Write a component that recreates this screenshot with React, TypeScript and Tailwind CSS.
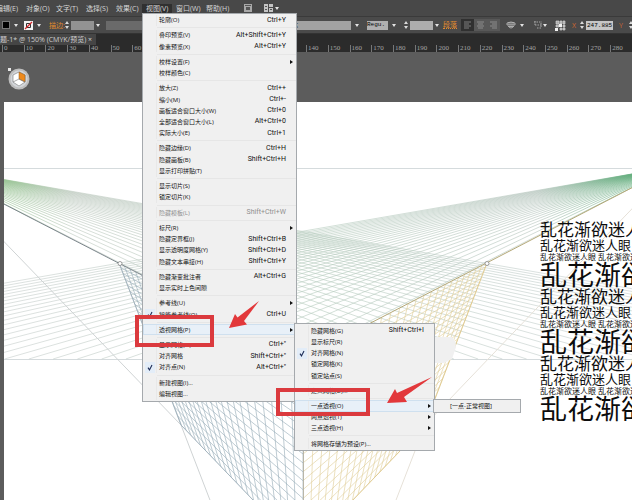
import { Fragment } from "react";
import type { ReactNode } from "react";
import { clsx } from "clsx";

type Item = {
  label: string;
  keys?: string;
  checked?: boolean;
  disabled?: boolean;
  active?: boolean;
  sub?: boolean;
  menu?: ReactNode;
};

const viewMenu: Item[][] = [
  [{ label: "轮廓(O)", keys: "Ctrl+Y" }],
  [
    { label: "叠印预览(V)", keys: "Alt+Shift+Ctrl+Y" },
    { label: "像素预览(X)", keys: "Alt+Ctrl+Y" },
  ],
  [{ label: "校样设置(F)", sub: true }, { label: "校样颜色(C)" }],
  [
    { label: "放大(Z)", keys: "Ctrl++" },
    { label: "缩小(M)", keys: "Ctrl+-" },
    { label: "画板适合窗口大小(W)", keys: "Ctrl+0" },
    { label: "全部适合窗口大小(L)", keys: "Alt+Ctrl+0" },
    { label: "实际大小(E)", keys: "Ctrl+1" },
  ],
  [
    { label: "隐藏边缘(D)", keys: "Ctrl+H" },
    { label: "隐藏画板(B)", keys: "Shift+Ctrl+H" },
    { label: "显示打印拼贴(T)" },
  ],
  [{ label: "显示切片(S)" }, { label: "锁定切片(K)" }],
  [{ label: "隐藏模板(L)", keys: "Shift+Ctrl+W", disabled: true }],
  [
    { label: "标尺(R)", sub: true },
    { label: "隐藏定界框(J)", keys: "Shift+Ctrl+B" },
    { label: "显示透明度网格(Y)", keys: "Shift+Ctrl+D" },
    { label: "隐藏文本串接(H)", keys: "Shift+Ctrl+Y" },
  ],
  [
    { label: "隐藏渐变批注者", keys: "Alt+Ctrl+G" },
    { label: "显示实时上色间隙" },
  ],
  [
    { label: "参考线(U)", sub: true },
    { label: "智能参考线(Q)", keys: "Ctrl+U", checked: true },
  ],
  [{ label: "透视网格(P)", sub: true, active: true, menu: <GridMenu /> }],
  [
    { label: "显示网格(G)", keys: 'Ctrl+"' },
    { label: "对齐网格", keys: 'Shift+Ctrl+"' },
    { label: "对齐点(N)", keys: 'Alt+Ctrl+"', checked: true },
  ],
  [{ label: "新建视图(I)..." }, { label: "编辑视图..." }],
];

const gridMenu: Item[][] = [
  [
    { label: "隐藏网格(G)", keys: "Shift+Ctrl+I" },
    { label: "显示标尺(R)" },
    { label: "对齐网格(N)", checked: true },
    { label: "锁定网格(K)" },
    { label: "锁定站点(S)" },
  ],
  [{ label: "定义网格(D)..." }],
  [
    { label: "一点透视(O)", sub: true, active: true, menu: <PresetMenu /> },
    { label: "两点透视(T)", sub: true },
    { label: "三点透视(H)", sub: true },
  ],
  [{ label: "将网格存储为预设(P)..." }],
];

function MenuRows({ groups }: { groups: Item[][] }) {
  return groups.map((group, i) => (
    <Fragment key={i}>
      {i > 0 && (
        <li role="separator" className="flex h-1 shrink-0 items-center pl-3.5">
          <div className="h-px w-full bg-[#e6e6e6]" />
        </li>
      )}
      {group.map((item) => (
        <li key={item.label} className="relative flex min-h-0 flex-1">
          <button
            disabled={item.disabled}
            className={clsx(
              "flex w-full items-center text-left leading-none",
              item.disabled ? "text-[#8f8f8f]" : "text-[#111]",
              item.active && "bg-[#e8f0f8] outline outline-[#cfe0ef] -outline-offset-1",
            )}
          >
            <span className="flex w-3.5 shrink-0 justify-center self-stretch border-r border-[#e8e8e8]">
              {item.checked && (
                <svg viewBox="0 0 10 10" className="h-full w-2.5 bg-[#e3edf8]">
                  <path d="M3 5l1.5 2.3L7 2.5" fill="none" stroke="#1b2a55" strokeWidth="1.1" />
                </svg>
              )}
            </span>
            <span className="pl-0.5 whitespace-nowrap">{item.label}</span>
            <span className="ml-auto font-[Roboto] text-[7px] whitespace-nowrap">{item.keys}</span>
            <span className="flex w-2.5 shrink-0 justify-center">
              {item.sub && (
                <svg viewBox="0 0 3 4" className="h-1 w-[3px]">
                  <path d="M0 0l3 2-3 2z" fill="#111" />
                </svg>
              )}
            </span>
          </button>
          {item.menu}
        </li>
      ))}
    </Fragment>
  ));
}

function PresetMenu() {
  return (
    <ul className="absolute -top-px left-full -ml-px flex h-3.5 w-[88px] border border-[#a5a9ad] bg-[#f0f0f0]">
      <li className="flex w-full">
        <button className="w-full pl-4 text-left leading-none whitespace-nowrap text-[#111]">
          [一点-正常视图]
        </button>
      </li>
    </ul>
  );
}

function GridMenu() {
  return (
    <ul className="absolute -top-px left-full -ml-0.5 flex h-32 w-[141px] flex-col border border-[#a5a9ad] bg-[#f0f0f0] py-px">
      <MenuRows groups={gridMenu} />
    </ul>
  );
}

function ViewMenu() {
  return (
    <ul className="absolute top-full left-0 z-10 flex h-[389px] w-[155px] flex-col border border-[#a5a9ad] bg-[#f0f0f0] py-px text-[6px]">
      <MenuRows groups={viewMenu} />
    </ul>
  );
}

const menus = ["编辑(E)", "对象(O)", "文字(T)", "选择(S)", "效果(C)", "视图(V)", "窗口(W)", "帮助(H)"];

function MenuBar() {
  return (
    <nav className="flex h-[17px] items-center border-b border-[#3a3a3a] bg-[#484848] text-[7px] text-[#d6d6d6]">
      <ul className="-ml-2 flex">
        {menus.map((name) => (
          <li key={name} className="relative h-[9px] w-[30px]">
            <button
              className={clsx(
                "flex h-full w-full items-center pl-1 leading-none whitespace-nowrap",
                name === "视图(V)" && "bg-[#303030]",
              )}
            >
              {name}
            </button>
            {name === "视图(V)" && <ViewMenu />}
          </li>
        ))}
      </ul>
      <button aria-label="Bridge" className="ml-3">
        <svg viewBox="0 0 8 8" className="size-2">
          <path d="M0 0h8v8H0z" fill="#a8a8a8" />
          <path d="M1 1h6v1H1zM2 3h4v3H2z" fill="#555" />
        </svg>
      </button>
      <button aria-label="排列文档" className="ml-3 flex items-center gap-0.5">
        <svg viewBox="0 0 9 8" className="h-2 w-[9px]">
          <path d="M0 0h4v8H0zM5 0h4v3H5zM5 4h4v4H5z" fill="#c4c4c4" />
          <path d="M1 2h2v1H1zM1 5h2v1H1zM6 5h2v1H6z" fill="#555" />
        </svg>
        <Caret />
      </button>
    </nav>
  );
}

function Caret() {
  return (
    <svg viewBox="0 0 4 3" className="h-[3px] w-1 shrink-0">
      <path d="M0 0h4L2 3z" fill="#e4e4e4" />
    </svg>
  );
}

function Spinner() {
  return (
    <svg viewBox="0 0 4 8" className="h-2 w-1 shrink-0">
      <path d="M0 3l2-3 2 3zM0 5h4L2 8z" fill="#dadada" />
    </svg>
  );
}

function OptionsBar() {
  return (
    <div className="flex h-[17px] items-center border-b border-[#333] bg-[#4a4a4a] text-[7px] leading-none whitespace-nowrap">
      <div className="flex w-[142px] shrink-0 items-center pl-0.5">
        <button aria-label="填色" className="size-2 border border-[#777] bg-black" />
        <span className="ml-1"><Caret /></span>
        <button aria-label="描边颜色" className="ml-1.5">
          <svg viewBox="0 0 9 9" className="size-[9px]">
            <path d="M0 0h9v9H0z" fill="#f3f3f3" />
            <path d="M2.5 2.5h4v4h-4z" fill="none" stroke="#333" />
            <path d="M1 8L8 1" stroke="#d5282c" strokeWidth="1.3" />
          </svg>
        </button>
        <span className="ml-1"><Caret /></span>
        <label htmlFor="stroke" className="ml-2 text-[#e08a2e]">描边:</label>
        <span className="ml-auto"><Spinner /></span>
        <input id="stroke" className="ml-0.5 h-[9px] w-[23px] bg-[#929292]" />
        <span className="ml-0.5"><Caret /></span>
        <input aria-label="画笔" className="ml-1.5 h-[9px] w-9 bg-[#6a6a6a]" />
      </div>
      <div className="ml-[142px] flex flex-1 items-center">
        <select aria-label="字体" className="h-[9px] w-[67px] shrink-0 appearance-none bg-[#a2a2a2] text-black">
          <option>黑体</option>
        </select>
        <span className="ml-1"><Caret /></span>
        <select
          aria-label="字体样式"
          className="ml-2 h-[9px] w-[21px] shrink-0 appearance-none bg-[#b0b0b0] font-['Liberation_Mono'] text-[6px] text-black"
        >
          <option>Regu.</option>
        </select>
        <span className="ml-1"><Caret /></span>
        <span className="ml-2"><Spinner /></span>
        <input aria-label="字号" className="ml-0.5 h-[9px] w-[23px] shrink-0 bg-[#adadad]" />
        <span className="ml-0.5"><Caret /></span>
        <button className="ml-1 border-b border-dotted border-[#e08a2e] text-[#e08a2e]">段落</button>
        <div className="ml-1 flex">
          <AlignButton label="左对齐" d="M1 1h7M1 3h5M1 5h7M1 7h5" on />
          <AlignButton label="居中对齐" d="M1 1h7M2 3h5M1 5h7M2 7h5" />
          <AlignButton label="右对齐" d="M1 1h7M3 3h5M1 5h7M3 7h5" />
        </div>
        <button aria-label="封套" className="ml-1.5 flex items-center gap-1">
          <svg viewBox="0 0 10 8" className="h-2 w-2.5" fill="none" stroke="#c4c4c4" strokeWidth="0.8">
            <path d="M1 4V2q4-2 8 0v2zM3 1v3M5 1v3M7 1v3M2 5q3 4 6 0M3 5.5h4" />
          </svg>
          <Caret />
        </button>
        <button aria-label="对齐" className="ml-2.5 flex items-center">
          <svg viewBox="0 0 9 8" className="h-2 w-[9px]" fill="none" stroke="#a5a5a5" strokeDasharray="1.5 1">
            <path d="M0 1h8M1 4h7M3 7h4M1 0v5M7 2v5" />
          </svg>
          <Caret />
        </button>
        <svg viewBox="0 0 11 11" className="ml-2 size-[11px]">
          <path d="M1 1h3v3H1zM5 1h2v3H5zM8 1h2v3H8zM1 5h3v2H1zM8 5h2v2H8zM5 8h2v2H5zM8 8h2v2H8z" fill="#a9a9a9" stroke="#dedede" strokeWidth="0.6" />
          <path d="M4 4h3v3H4zM0 8h3v3H0z" fill="#f2f2f2" />
        </svg>
        <label htmlFor="posx" className="ml-1.5 w-2 text-[#d0672f]">X</label>
        <Spinner />
        <input
          id="posx"
          defaultValue="247.885"
          className="ml-0.5 h-[9px] w-[27px] shrink-0 bg-[#c6c6c6] pl-px font-['Liberation_Mono'] text-[6px] text-black"
        />
        <label htmlFor="posy" className="ml-1.5 w-2.5 text-[#d0672f]">Y</label>
        <Spinner />
      </div>
      <input id="posy" className="w-0" />
    </div>
  );
}

function AlignButton({ label, d, on }: { label: string; d: string; on?: boolean }) {
  return (
    <button
      aria-label={label}
      className={clsx("flex h-3 w-[13px] items-center justify-center", on ? "bg-[#303030]" : "bg-[#585858]")}
    >
      <svg viewBox="0 0 9 8" className="h-2 w-[9px]" stroke={on ? "#7c7c7c" : "#8c8c8c"}>
        <path d={d} />
      </svg>
    </button>
  );
}

function DocumentHead() {
  return (
    <>
      <div className="flex h-[11px] bg-[#2b2b2b]">
        <div className="flex w-24 items-center justify-between bg-[#454545] pr-1 text-[7px] leading-none whitespace-nowrap text-[#cfcfcf]">
          <span>题-1* @ 150% (CMYK/预览)</span>
          <button aria-label="关闭">×</button>
        </div>
      </div>
      <div className="flex h-[7px] bg-[#2b2b2b] pl-0.5">
        {Array.from({ length: 29 }, (_, i) => (
          <div
            key={i}
            className="min-w-0 flex-1 border-l border-[#777] pl-px font-['Liberation_Serif'] text-[7px] leading-[6px] text-[#a5a5a5]"
          >
            {i * 10}
          </div>
        ))}
      </div>
    </>
  );
}

// Vanishing points: two on the horizon, one far below the page.
const HORIZON = 166;
const LEFT = -68;
const RIGHT = 672;
const CENTER = 303;
const NADIR = 740;

const fan = Array.from({ length: 31 }, (_, i) => 1 / (5.75 - (i * 3.79) / 30));
const wallRows = Array.from({ length: 23 }, (_, i) => 355 + (i * 196) / 22);
const wallCols = Array.from({ length: 23 }, (_, i) => {
  const t = i / 22;
  return (184 * t * 1.6) / (1 + 0.6 * t);
});

function floorPath(dir: 1 | -1) {
  const x = dir === 1 ? LEFT : RIGHT;
  return fan.map((s) => `M${x} ${HORIZON}L${x + (dir * 192) / s} 358`).join("");
}

function wallPath(dir: 1 | -1) {
  const vp = dir === 1 ? RIGHT : LEFT;
  const rows = wallRows.map((y) => `M${CENTER} ${y}L${vp} ${HORIZON}`);
  const cols = wallCols.map((dx) => `M${CENTER + dir * dx} ${357 - dx * 0.516}L${CENTER} ${NADIR}`);
  return rows.join("") + cols.join("");
}

function PerspectiveGrid() {
  return (
    <svg
      viewBox="0 51 632 449"
      preserveAspectRatio="xMinYMin slice"
      className="absolute inset-0 h-full w-full"
      fill="none"
    >
      <defs>
        <linearGradient id="fadeLeft" gradientUnits="userSpaceOnUse" x1="0" y1="0" x2="632" y2="0">
          <stop offset="0" stopColor="#8fc08a" />
          <stop offset="0.12" stopColor="#bcc8be" />
          <stop offset="0.5" stopColor="#b5cbbd" />
          <stop offset="1" stopColor="#c6cdcf" />
        </linearGradient>
        <linearGradient id="fadeRight" gradientUnits="userSpaceOnUse" x1="0" y1="0" x2="632" y2="0">
          <stop offset="0" stopColor="#c6cdcb" />
          <stop offset="0.5" stopColor="#b5cbbd" />
          <stop offset="0.85" stopColor="#b4c4bc" />
          <stop offset="1" stopColor="#62ad7c" />
        </linearGradient>
        <clipPath id="page"><path d="M4 101h628v399H4z" /></clipPath>
        <clipPath id="wallR"><path d="M303 357L487 262L425 424L303 551z" /></clipPath>
        <clipPath id="wallL"><path d="M303 357L119 262L181 424L303 551z" /></clipPath>
      </defs>
      <path d="M4 101h628v1000H4z" fill="#fff" />
      <g clipPath="url(#page)">
        <path d="M4 167.5h628M4 358.5h628" stroke="#d5dbdd" />
        <path d={floorPath(1)} stroke="url(#fadeLeft)" strokeWidth="0.6" />
        <path d={floorPath(-1)} stroke="url(#fadeRight)" strokeWidth="0.6" />
        <path d={`M${LEFT} ${HORIZON}L181 424L${CENTER} ${NADIR}`} stroke="#cfd3d4" />
        <path d={`M${RIGHT} ${HORIZON}L425 424L${CENTER} ${NADIR}`} stroke="#e6e1d8" />
        <path d={wallPath(-1)} stroke="#93a9b6" strokeWidth="0.6" clipPath="url(#wallL)" />
        <path d={wallPath(1)} stroke="#dfcc96" strokeWidth="0.6" clipPath="url(#wallR)" />
        <path d="M487 262L425 424L303 551" stroke="#e0cb92" />
        <path d="M119 262L181 424L303 551" stroke="#a3b3bd" />
        <path d="M303.5 357V500" stroke="#b9b6a8" />
        <path d={`M${LEFT} ${HORIZON}L303 357`} stroke="#7c868c" />
        <path d={`M${RIGHT} ${HORIZON}L303 357`} stroke="#b5a878" />
        <circle cx="120" cy="262.5" r="2" fill="#fff" stroke="#777" strokeWidth="0.7" />
        <circle cx="487" cy="262.5" r="2" fill="#fff" stroke="#777" strokeWidth="0.7" />
        <path d="M430 336h22q4 4 4 10l-4 12-8 4h-14z" fill="#f0f0f0" />
      </g>
    </svg>
  );
}

function PlaneSwitch() {
  return (
    <button aria-label="平面切换构件" className="absolute top-4 left-2">
      <svg viewBox="0 0 22 22" className="size-[22px]">
        <circle cx="11" cy="11" r="10.5" fill="#bdbdbd" />
        <circle cx="11" cy="11" r="8.500" fill="#d3d6da" />
        <path d="M11 4l6 3v7l-6 4-6-4V7z" fill="#fff" stroke="#777" strokeWidth="0.6" />
        <path d="M11 4l6 3v7l-6-3z" fill="#ee8a1d" stroke="#8a5a20" strokeWidth="0.5" />
        <path d="M11 11l-6 3M11 11l6 3" stroke="#777" strokeWidth="0.6" />
        <path d="M0 0h3v3H0z" fill="#e8e8e8" />
      </svg>
    </button>
  );
}

function Artwork() {
  return (
    <div className="absolute top-[170px] left-[540px] whitespace-nowrap text-[#0c0c0c]">
      {[0, 1, 2].map((n) => (
        <Fragment key={n}>
          <p className="text-[17px] leading-4">乱花渐欲迷人眼 乱花渐欲迷人眼</p>
          <p className="text-[13px] leading-[15px]">乱花渐欲迷人眼 乱花渐欲迷人眼</p>
          <p className="text-[8px] leading-2">乱花渐欲迷人眼 乱花渐欲迷人眼</p>
          <p className="text-[27px] leading-7">乱花渐欲迷人眼 乱花渐欲迷人眼</p>
        </Fragment>
      ))}
    </div>
  );
}

function Marks() {
  return (
    <svg
      viewBox="0 0 632 500"
      preserveAspectRatio="xMinYMin slice"
      className="pointer-events-none absolute inset-0 z-20 h-full w-full"
    >
      <path d="M137 317h75v28h-75zM278 390h90v24h-90z" fill="none" stroke="#db3a3e" strokeWidth="4" />
      <path d="M229 328l6-14 2.5 3.5L259 301l-15 20 3 3.5z" fill="#e2383b" />
      <path d="M387 403l8-14 2 4 35-16-28 20 3 5z" fill="#e2383b" />
    </svg>
  );
}

export default function App() {
  return (
    <div className="relative flex min-h-screen flex-col overflow-hidden bg-[#5c5c5c] font-['Open_Sans','Noto_Sans_CJK_SC',sans-serif]">
      <MenuBar />
      <OptionsBar />
      <DocumentHead />
      <main className="relative flex-1 overflow-hidden">
        <PerspectiveGrid />
        <PlaneSwitch />
        <Artwork />
      </main>
      <Marks />
    </div>
  );
}
